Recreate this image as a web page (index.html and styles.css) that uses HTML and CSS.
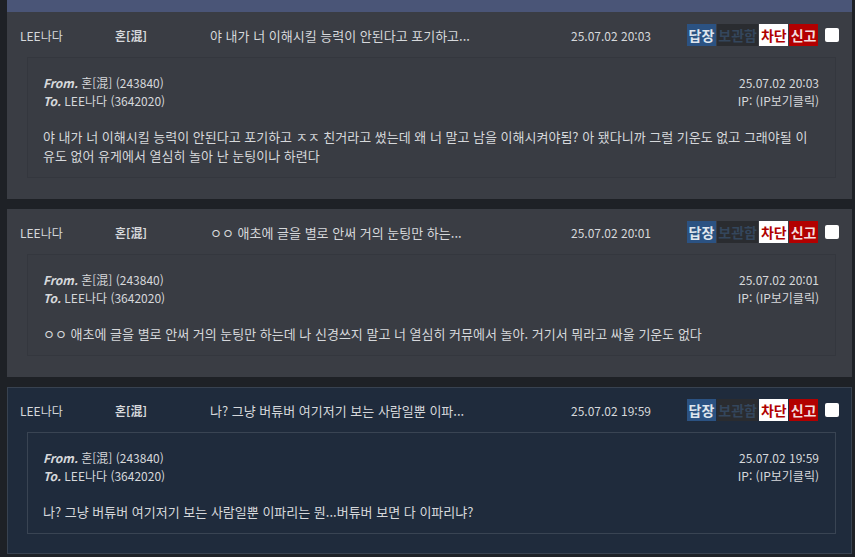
FILE: index.html
```html
<!DOCTYPE html>
<html lang="ko">
<head>
  <meta charset="UTF-8">
  <meta name="viewport" content="width=device-width, initial-scale=1.0">
  <title>쪽지함</title>
  <link rel="stylesheet" href="styles.css">
</head>
<body>

  <div class="memo-list">
    <div class="list-top"></div>

    <!-- 쪽지 1 -->
    <div class="memo">
      <div class="memo-head">
        <span class="col-to">LEE나다</span>
        <span class="col-from">혼[混]</span>
        <span class="col-subject">야 내가 너 이해시킬 능력이 안된다고 포기하고...</span>
        <span class="col-date">25.07.02 20:03</span>
        <span class="actions">
          <a class="btn btn-reply">답장</a><a class="btn btn-keep">보관함</a><a class="btn btn-block">차단</a><a class="btn btn-report">신고</a>
        </span>
        <input type="checkbox" class="check">
      </div>
      <div class="memo-body">
        <div class="memo-meta">
          <div>
            <div><em>From.</em> 혼[混] (243840)</div>
            <div><em>To.</em> LEE나다 (3642020)</div>
          </div>
          <div class="meta-right">
            <div>25.07.02 20:03</div>
            <div>IP: (IP보기클릭)</div>
          </div>
        </div>
        <p class="memo-text">야 내가 너 이해시킬 능력이 안된다고 포기하고 ㅈㅈ 친거라고 썼는데 왜 너 말고 남을 이해시켜야됨? 아 됐다니까 그럴 기운도 없고 그래야될 이유도 없어 유게에서 열심히 놀아 난 눈팅이나 하련다</p>
      </div>
    </div>

    <!-- 쪽지 2 -->
    <div class="memo">
      <div class="memo-head">
        <span class="col-to">LEE나다</span>
        <span class="col-from">혼[混]</span>
        <span class="col-subject">ㅇㅇ 애초에 글을 별로 안써 거의 눈팅만 하는...</span>
        <span class="col-date">25.07.02 20:01</span>
        <span class="actions">
          <a class="btn btn-reply">답장</a><a class="btn btn-keep">보관함</a><a class="btn btn-block">차단</a><a class="btn btn-report">신고</a>
        </span>
        <input type="checkbox" class="check">
      </div>
      <div class="memo-body">
        <div class="memo-meta">
          <div>
            <div><em>From.</em> 혼[混] (243840)</div>
            <div><em>To.</em> LEE나다 (3642020)</div>
          </div>
          <div class="meta-right">
            <div>25.07.02 20:01</div>
            <div>IP: (IP보기클릭)</div>
          </div>
        </div>
        <p class="memo-text">ㅇㅇ 애초에 글을 별로 안써 거의 눈팅만 하는데 나 신경쓰지 말고 너 열심히 커뮤에서 놀아. 거기서 뭐라고 싸울 기운도 없다</p>
      </div>
    </div>

    <!-- 쪽지 3 (선택됨) -->
    <div class="memo memo-active">
      <div class="memo-head">
        <span class="col-to">LEE나다</span>
        <span class="col-from">혼[混]</span>
        <span class="col-subject">나? 그냥 버튜버 여기저기 보는 사람일뿐 이파...</span>
        <span class="col-date">25.07.02 19:59</span>
        <span class="actions">
          <a class="btn btn-reply">답장</a><a class="btn btn-keep">보관함</a><a class="btn btn-block">차단</a><a class="btn btn-report">신고</a>
        </span>
        <input type="checkbox" class="check">
      </div>
      <div class="memo-body">
        <div class="memo-meta">
          <div>
            <div><em>From.</em> 혼[混] (243840)</div>
            <div><em>To.</em> LEE나다 (3642020)</div>
          </div>
          <div class="meta-right">
            <div>25.07.02 19:59</div>
            <div>IP: (IP보기클릭)</div>
          </div>
        </div>
        <p class="memo-text">나? 그냥 버튜버 여기저기 보는 사람일뿐 이파리는 뭔...버튜버 보면 다 이파리냐?</p>
      </div>
    </div>
  </div>

</body>
</html>
```

FILE: styles.css
```css
body {
  margin: 0;
  background-color: #1e2126;
  font-family: "Noto Sans CJK KR", "Noto Sans", sans-serif;
  font-size: 12px;
  color: #d6d8db;
}

.memo-list {
  margin-left: 7px;
  margin-right: 3px;
}

.list-top {
  height: 12px;
  background-color: #4a5577;
}

.memo {
  background-color: #3a3d44;
  padding: 12px 16px 21px 13px;
  margin-bottom: 10px;
}

.memo-active {
  background-color: #1f2b3c;
  border: 1px solid #384250;
  padding: 11px 15px 19px 12px;
}

.memo-head {
  display: flex;
  align-items: center;
  height: 22px;
  margin-bottom: 11px;
  white-space: nowrap;
}

.col-to,
.col-from {
  width: 95px;
  flex-shrink: 0;
}

.col-from {
  font-weight: bold;
}

.col-subject {
  width: 361px;
  flex-shrink: 0;
  overflow: hidden;
  font-size: 13px;
}

.col-date {
  width: 116px;
  flex-shrink: 0;
}

.actions {
  display: flex;
  flex-shrink: 0;
  gap: 1px;
}

.btn {
  display: block;
  height: 22px;
  line-height: 22px;
  padding: 0 1.5px;
  font-size: 14px;
  font-weight: bold;
  cursor: pointer;
}

.btn-reply {
  background-color: #2b5282;
  color: #dfe6ee;
}

.btn-keep {
  background-color: #2a2c30;
  color: #34465c;
}

.btn-block {
  background-color: #ffffff;
  color: #b00000;
}

.btn-report {
  background-color: #b20000;
  color: #f2dede;
}

.check {
  appearance: none;
  flex-shrink: 0;
  width: 14px;
  height: 14px;
  margin: 0 0 0 7px;
  background-color: #ffffff;
  border-radius: 2px;
}

.memo-body {
  margin-left: 7px;
  background-color: #393c43;
  border: 1px solid #34373e;
  padding: 16px 16px 12px 15px;
}

.memo-active .memo-body {
  background-color: #1f2b3c;
  border-color: #394453;
}

.memo-meta {
  display: flex;
  justify-content: space-between;
  line-height: 18px;
}

.memo-meta em {
  font-weight: bold;
}

.meta-right {
  text-align: right;
}

.memo-text {
  margin: 17px 0 0 0;
  line-height: 19px;
  font-size: 13px;
}
```
